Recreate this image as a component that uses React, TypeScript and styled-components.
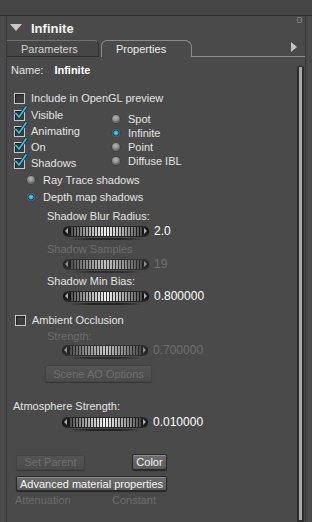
import React from "react";
import styled, { createGlobalStyle, css } from "styled-components";

const GlobalStyle = createGlobalStyle`
  html, body { margin: 0; padding: 0; background: #4a4a4a; }
  body { font-family: "Liberation Sans", Arial, sans-serif; font-size: 11px; color: #e6e6e6; }
  * { box-sizing: border-box; }
`;

const Page = styled.div`
  width: 312px;
  height: 522px;
  overflow: hidden;
  display: flex;
  flex-direction: column;
  background: #4a4a4a;
`;

const TopStrip = styled.div`
  height: 16px;
  flex: none;
  background: #454545;
  border-bottom: 1px solid #353535;
`;

const Frame = styled.div`
  flex: 1;
  display: flex;
  padding: 0 6px;
  min-height: 0;
`;

const Panel = styled.div`
  flex: 1;
  display: flex;
  flex-direction: column;
  border-left: 1px solid #383838;
  border-right: 1px solid #383838;
  min-height: 0;
`;

const Header = styled.div`
  height: 24px;
  display: flex;
  align-items: center;
  padding-left: 3px;
  position: relative;
`;

const Disclosure = styled.span`
  width: 0;
  height: 0;
  border-left: 6px solid transparent;
  border-right: 6px solid transparent;
  border-top: 7px solid #c8c8c8;
  margin-right: 9px;
  margin-top: -2px;
`;

const Title = styled.span`
  font-size: 13px;
  font-weight: bold;
  color: #f4f4f4;
`;

const CornerBox = styled.span`
  position: absolute;
  right: 3px;
  top: 1px;
  width: 5px;
  height: 6px;
  border: 1px solid #7a7a7a;
  border-radius: 1px;
  background: #505050;
`;

const TabBar = styled.div`
  height: 17px;
  display: flex;
  align-items: flex-end;
`;

const Tab = styled.div<{ $active?: boolean; $width: number }>`
  width: ${(p) => p.$width}px;
  height: 17px;
  display: flex;
  align-items: center;
  padding-left: 14px;
  font-size: 11px;
  ${(p) =>
    p.$active
      ? css`
          border: 1px solid #8a8a8a;
          border-bottom: none;
          border-radius: 6px 7px 0 0;
          color: #eeeeee;
          background: #4a4a4a;
          margin-left: 2px;
        `
      : css`
          border-top: 1px solid #727272;
          border-right: 1px solid #2f2f2f;
          border-bottom: 1px solid #2e2e2e;
          border-radius: 0 5px 0 0;
          background: #464646;
          color: #d4d4d4;
        `}
`;

const TabFiller = styled.div`
  flex: 1;
  height: 17px;
  border-bottom: 1px solid #8d8d8d;
  display: flex;
  justify-content: flex-end;
  align-items: center;
  padding-right: 8px;
  padding-bottom: 2px;
`;

const RightArrow = styled.span`
  width: 0;
  height: 0;
  border-top: 5px solid transparent;
  border-bottom: 5px solid transparent;
  border-left: 6px solid #c4c4c4;
`;

const Body = styled.div`
  flex: 1;
  display: flex;
  min-height: 0;
`;

const Content = styled.div`
  flex: 1;
  display: flex;
  flex-direction: column;
  padding-left: 4px;
`;

const ScrollColumn = styled.div`
  width: 7px;
  margin-right: 1px;
  padding-top: 9px;
  display: flex;
`;

const ScrollBar = styled.div`
  width: 6px;
  flex: 1;
  border: 2px solid #2c2c2c;
  border-top-width: 1px;
  border-radius: 2px 2px 0 0;
  background: #a8a8a8;
`;

const Row = styled.div<{ $top?: number; $indent?: number; $h?: number }>`
  display: flex;
  align-items: center;
  height: ${(p) => p.$h ?? 14}px;
  margin-top: ${(p) => p.$top ?? 0}px;
  padding-left: ${(p) => p.$indent ?? 0}px;
  white-space: nowrap;
`;

const Label = styled.span<{ $dim?: boolean; $bright?: boolean; $bold?: boolean }>`
  color: ${(p) => (p.$dim ? "#6c6c6c" : p.$bright ? "#ffffff" : "#e4e4e4")};
  font-weight: ${(p) => (p.$bold ? "bold" : "normal")};
`;

const NameValue = styled(Label)`
  margin-left: 11px;
`;

const Group = styled.div`
  display: flex;
  margin-top: 2px;
`;

const Column = styled.div<{ $top?: number; $width?: number }>`
  display: flex;
  flex-direction: column;
  padding-top: ${(p) => p.$top ?? 0}px;
  width: ${(p) => (p.$width ? `${p.$width}px` : "auto")};
`;

const BoxWrap = styled.span`
  position: relative;
  width: 11px;
  height: 11px;
  margin-right: 6px;
  flex: none;
`;

const Box = styled.span`
  position: absolute;
  left: 0;
  top: 0;
  width: 11px;
  height: 11px;
  border: 1px solid #c9c9c9;
  background: #3c3c3c;
  box-shadow: inset 1px 1px 1px rgba(0, 0, 0, 0.5);
`;

const Tick = styled.svg`
  position: absolute;
  left: 1px;
  top: -4px;
  overflow: visible;
`;

const Checkbox: React.FC<{ checked?: boolean }> = ({ checked }) => (
  <BoxWrap>
    <Box />
    {checked && (
      <Tick width="12" height="13" viewBox="0 0 12 13">
        <path d="M1 7.5 L4 11 L11 1" fill="none" stroke="#1a2a30" strokeWidth="3.2" strokeLinecap="round" strokeLinejoin="round" />
        <path d="M1 7.5 L4 11 L11 1" fill="none" stroke="#27c4ea" strokeWidth="1.8" strokeLinecap="round" strokeLinejoin="round" />
      </Tick>
    )}
  </BoxWrap>
);

const RadioDot = styled.span<{ $on?: boolean }>`
  width: 8px;
  height: 8px;
  border-radius: 50%;
  margin-right: 8px;
  flex: none;
  background: ${(p) =>
    p.$on
      ? "radial-gradient(circle at 50% 50%, #5fd6f6 0, #2ea6d2 2px, #14394a 3px, #6b7f86 4px)"
      : "radial-gradient(circle at 45% 35%, #b4b4b4 0, #8e8e8e 3px, #6c6c6c 4px)"};
  box-shadow: 0 0 0 0.5px #3a3a3a;
`;

const SliderRow = styled.div<{ $top?: number; $indent?: number }>`
  display: flex;
  align-items: center;
  height: 12px;
  margin-top: ${(p) => p.$top ?? 0}px;
  padding-left: ${(p) => p.$indent ?? 52}px;
`;

const Track = styled.span<{ $dim?: boolean }>`
  position: relative;
  width: 86px;
  height: 11px;
  border-radius: 5px;
  background: linear-gradient(#2a2a2a, #111 50%, #2a2a2a);
  display: flex;
  align-items: center;
  padding: 0 2px;
  flex: none;
  opacity: ${(p) => (p.$dim ? 0.72 : 1)};
  &::after {
    content: "";
    position: absolute;
    left: 6px;
    right: 6px;
    bottom: -3px;
    height: 2px;
    border-radius: 2px;
    background: linear-gradient(90deg, transparent, rgba(20, 20, 20, 0.7) 30%, rgba(20, 20, 20, 0.7) 70%, transparent);
  }
`;

const ArrowL = styled.span`
  width: 0;
  height: 0;
  border-top: 3px solid transparent;
  border-bottom: 3px solid transparent;
  border-right: 3px solid #b0b0b0;
  margin-right: 2px;
`;

const ArrowR = styled.span`
  width: 0;
  height: 0;
  border-top: 3px solid transparent;
  border-bottom: 3px solid transparent;
  border-left: 3px solid #b0b0b0;
  margin-left: 2px;
`;

const Ribs = styled.span`
  flex: 1;
  height: 9px;
  background:
    repeating-linear-gradient(90deg, rgba(10, 10, 10, 0.8) 0 1px, transparent 1px 3px),
    linear-gradient(90deg, #4a4a4a 0%, #9a9a9a 20%, #f2f2f2 50%, #9a9a9a 80%, #4a4a4a 100%);
  border-radius: 1px;
`;

const SliderValue = styled.span<{ $dim?: boolean }>`
  margin-left: 5px;
  font-size: 12px;
  color: ${(p) => (p.$dim ? "#6e6e6e" : "#ffffff")};
`;

const Slider: React.FC<{ value: string; dim?: boolean; top?: number; indent?: number }> = ({ value, dim, top, indent }) => (
  <SliderRow $top={top} $indent={indent}>
    <Track $dim={dim}>
      <ArrowL />
      <Ribs />
      <ArrowR />
    </Track>
    <SliderValue $dim={dim}>{value}</SliderValue>
  </SliderRow>
);

const Button = styled.button<{ $disabled?: boolean; $width?: number; $h?: number }>`
  height: ${(p) => p.$h ?? 16}px;
  width: ${(p) => (p.$width ? `${p.$width}px` : "auto")};
  padding: 0 3px;
  font-family: "Liberation Sans", Arial, sans-serif;
  font-size: 11px;
  border-radius: 2px;
  display: inline-flex;
  align-items: center;
  justify-content: center;
  white-space: nowrap;
  ${(p) =>
    p.$disabled
      ? css`
          background: linear-gradient(#545454, #4c4c4c);
          border: 1px solid #444;
          color: #6e6e6e;
          box-shadow: 0 1px 1px rgba(0, 0, 0, 0.25);
        `
      : css`
          background: linear-gradient(#6e6e6e, #5a5a5a);
          border: 1px solid #2a2a2a;
          color: #f4f4f4;
          box-shadow: inset 0 1px 0 #8a8a8a, 0 1px 1px rgba(0, 0, 0, 0.5);
        `}
`;

const ButtonRow = styled.div<{ $top?: number; $indent?: number; $gap?: number }>`
  display: flex;
  align-items: center;
  margin-top: ${(p) => p.$top ?? 0}px;
  padding-left: ${(p) => p.$indent ?? 0}px;
  gap: ${(p) => p.$gap ?? 0}px;
`;

const FootLabel = styled.span<{ $width?: number }>`
  width: ${(p) => (p.$width ? `${p.$width}px` : "auto")};
  color: #6a6a6a;
  font-size: 11px;
`;

export default function App() {
  return (
    <Page>
      <GlobalStyle />
      <TopStrip />
      <Frame>
        <Panel>
          <Header>
            <Disclosure />
            <Title>Infinite</Title>
            <CornerBox />
          </Header>
          <TabBar>
            <Tab $width={92}>Parameters</Tab>
            <Tab $width={91} $active>
              Properties
            </Tab>
            <TabFiller>
              <RightArrow />
            </TabFiller>
          </TabBar>
          <Body>
            <Content>
              <Row $top={6}>
                <Label>Name:</Label>
                <NameValue $bright $bold>Infinite</NameValue>
              </Row>
              <Row $top={14} $indent={3}>
                <Checkbox />
                <Label>Include in OpenGL preview</Label>
              </Row>
              <Group>
                <Column $width={101}>
                  {["Visible", "Animating", "On", "Shadows"].map((t) => (
                    <Row key={t} $h={16} $indent={3}>
                      <Checkbox checked />
                      <Label>{t}</Label>
                    </Row>
                  ))}
                </Column>
                <Column $top={5}>
                  {["Spot", "Infinite", "Point", "Diffuse IBL"].map((t) => (
                    <Row key={t} $h={14}>
                      <RadioDot $on={t === "Infinite"} />
                      <Label>{t}</Label>
                    </Row>
                  ))}
                </Column>
              </Group>
              <Row $h={17} $indent={16}>
                <RadioDot />
                <Label>Ray Trace shadows</Label>
              </Row>
              <Row $h={17} $indent={16}>
                <RadioDot $on />
                <Label>Depth map shadows</Label>
              </Row>
              <Row $top={4} $indent={36}>
                <Label>Shadow Blur Radius:</Label>
              </Row>
              <Slider top={2} value="2.0" />
              <Row $top={5} $indent={36}>
                <Label $dim>Shadow Samples</Label>
              </Row>
              <Slider top={2} value="19" dim />
              <Row $top={4} $indent={36}>
                <Label>Shadow Min Bias:</Label>
              </Row>
              <Slider top={2} value="0.800000" />
              <Row $top={11} $indent={4}>
                <Checkbox />
                <Label>Ambient Occlusion</Label>
              </Row>
              <Row $top={2} $indent={36}>
                <Label $dim>Strength:</Label>
              </Row>
              <Slider top={1} value="0.700000" dim indent={51} />
              <ButtonRow $top={9} $indent={34}>
                <Button $disabled $width={107} $h={17}>
                  Scene AO Options
                </Button>
              </ButtonRow>
              <Row $top={17} $indent={2}>
                <Label>Atmosphere Strength:</Label>
              </Row>
              <Slider top={3} value="0.010000" indent={51} />
              <ButtonRow $top={26} $indent={5} $gap={47}>
                <Button $disabled $width={69} $h={15}>
                  Set Parent
                </Button>
                <Button $width={35}>Color</Button>
              </ButtonRow>
              <ButtonRow $top={6} $indent={5}>
                <Button $width={151} $h={15}>
                  Advanced material properties
                </Button>
              </ButtonRow>
              <Row $top={2} $indent={4}>
                <FootLabel $width={97}>Attenuation</FootLabel>
                <FootLabel>Constant</FootLabel>
              </Row>
            </Content>
            <ScrollColumn>
              <ScrollBar />
            </ScrollColumn>
          </Body>
        </Panel>
      </Frame>
    </Page>
  );
}
